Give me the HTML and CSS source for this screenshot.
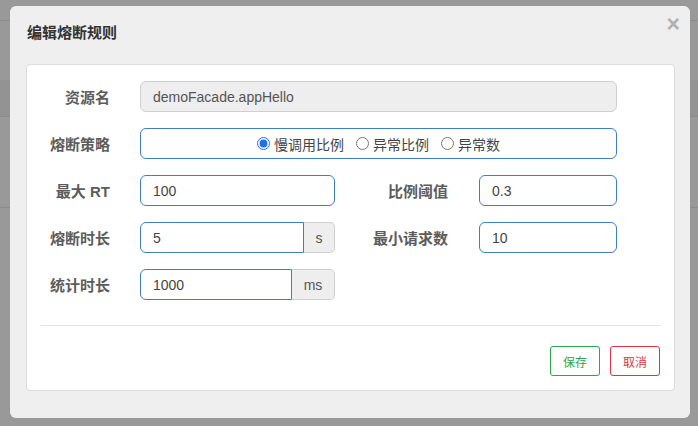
FILE: index.html
```html
<!DOCTYPE html>
<html lang="zh">
<head>
<meta charset="utf-8">
<link rel="stylesheet" href="styles.css">
</head>
<body>
<div class="page">
  <div class="page-top"></div>
  <div class="page-gap"></div>
  <div class="page-band"></div>
  <div class="page-rows"></div>
</div>
<div class="modal">
  <div class="modal-header">
    <h4 class="modal-title">编辑熔断规则</h4>
    <span class="close">×</span>
  </div>
  <div class="card">
    <div class="row">
      <label class="lbl">资源名</label>
      <div class="ctl full disabled">demoFacade.appHello</div>
    </div>
    <div class="row">
      <label class="lbl">熔断策略</label>
      <div class="ctl full radios">
        <label class="radio"><input type="radio" name="g" checked><span>慢调用比例</span></label>
        <label class="radio"><input type="radio" name="g"><span>异常比例</span></label>
        <label class="radio"><input type="radio" name="g"><span>异常数</span></label>
      </div>
    </div>
    <div class="row">
      <label class="lbl">最大 RT</label>
      <div class="ctl half">100</div>
      <label class="lbl lbl2">比例阈值</label>
      <div class="ctl small">0.3</div>
    </div>
    <div class="row">
      <label class="lbl">熔断时长</label>
      <div class="group">
        <div class="ctl grp">5</div>
        <span class="addon s">s</span>
      </div>
      <label class="lbl lbl2">最小请求数</label>
      <div class="ctl small">10</div>
    </div>
    <div class="row">
      <label class="lbl">统计时长</label>
      <div class="group">
        <div class="ctl grp">1000</div>
        <span class="addon ms">ms</span>
      </div>
    </div>
    <div class="divider"></div>
    <div class="actions">
      <button class="btn save">保存</button>
      <button class="btn cancel">取消</button>
    </div>
  </div>
</div>
</body>
</html>
```

FILE: styles.css
```css
* { box-sizing: border-box; }
html, body { margin: 0; padding: 0; }
body {
  width: 698px;
  height: 426px;
  overflow: hidden;
  background: #999999;
  font-family: "Liberation Sans", "Noto Sans CJK SC", sans-serif;
  position: relative;
}
.page-top { height: 21px; border-bottom: 1px solid #8c8c8c; }
.page-gap { height: 59px; }
.page-band { height: 37px; background: #939393; border-bottom: 1px solid #8c8c8c; }
.page-rows { height: 91px; border-bottom: 1px solid #8c8c8c; }

.modal {
  position: absolute;
  left: 10px;
  top: 6px;
  width: 680px;
  height: 412px;
  background: #efefef;
  border-radius: 6px;
}
.modal-header {
  height: 58px;
  padding: 17px 16px 0 17px;
  position: relative;
}
.modal-title {
  margin: 0;
  font-size: 15px;
  line-height: 20px;
  font-weight: bold;
  color: #333;
}
.close {
  position: absolute;
  right: 10px;
  top: 5px;
  font-size: 23px;
  font-weight: bold;
  color: #b0b0b0;
  line-height: 26px;
}
.card {
  margin: 0 15px 0 16px;
  background: #fff;
  border: 1px solid #dcdcdc;
  border-radius: 4px;
  padding: 16px 14px 14px 14px;
}
.row {
  display: flex;
  align-items: center;
  height: 31px;
  margin-bottom: 16px;
}
.row:last-of-type { margin-bottom: 0; }
.lbl {
  width: 69px;
  margin-right: 30px;
  text-align: right;
  font-size: 15px;
  font-weight: bold;
  color: #5c5c5c;
  white-space: nowrap;
}
.lbl2 { width: 113px; margin-right: 31px; }
.ctl {
  height: 31px;
  border: 1px solid #3d7fc1;
  border-radius: 6px;
  padding: 0 12px;
  display: flex;
  align-items: center;
  font-size: 14px;
  color: #444;
  background: #fff;
}
.full { width: 477px; }
.half { width: 195px; }
.small { width: 138px; }
.disabled { background: #eeeeee; border-color: #cfcfcf; color: #555; }
.radios { justify-content: center; padding: 0; gap: 0; }
.radio {
  display: flex;
  align-items: center;
  font-size: 14px;
  color: #444;
  margin-right: 12px;
}
.radio:last-child { margin-right: 0; }
.radio input {
  margin: 0 4px 0 0;
  width: 13px;
  height: 13px;
  accent-color: #1a73e8;
}
.group { display: flex; width: 195px; height: 31px; }
.grp { flex: 1; border-radius: 6px 0 0 6px; }
.addon {
  height: 31px;
  border: 1px solid #cfcfcf;
  border-left: none;
  border-radius: 0 5px 5px 0;
  background: #eeeeee;
  color: #555;
  font-size: 14px;
  display: flex;
  align-items: center;
  justify-content: center;
}
.addon.s { width: 31px; }
.addon.ms { width: 43px; }
.divider { height: 1px; background: #e3e3e3; margin-top: 25px; }
.actions {
  display: flex;
  justify-content: flex-end;
  gap: 10px;
  margin-top: 20px;
}
.btn {
  height: 30px;
  width: 50px;
  padding: 0;
  background: #fff;
  border: 1px solid;
  border-radius: 3px;
  font-family: "Liberation Sans", "Noto Sans CJK SC", sans-serif;
  font-size: 12px;
}
.save { border-color: #28a745; color: #28a745; }
.cancel { border-color: #dc3545; color: #dc3545; }
```
